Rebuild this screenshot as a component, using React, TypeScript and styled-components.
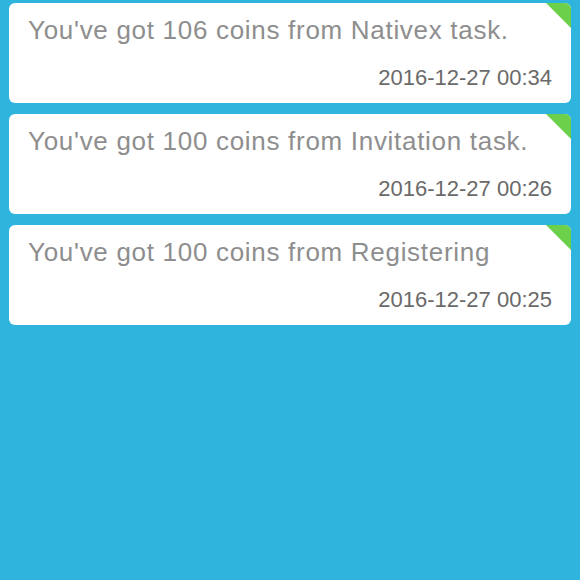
import React from "react";
import styled, { createGlobalStyle } from "styled-components";

const Global = createGlobalStyle`
  html, body {
    margin: 0;
    padding: 0;
    background: #2fb4de;
    font-family: "Helvetica Neue", "Liberation Sans", Arial, sans-serif;
  }
`;

const Page = styled.div`
  min-height: 580px;
  background: #2fb4de;
  padding: 3px 9px 0 9px;
  box-sizing: border-box;
  display: flex;
  flex-direction: column;
  gap: 11px;
`;

const Card = styled.div`
  position: relative;
  height: 100px;
  background: #ffffff;
  border-radius: 6px;
  overflow: hidden;
  box-sizing: border-box;
  padding: 11px 19px 0 19px;
  display: flex;
  flex-direction: column;
`;

const Corner = styled.div`
  position: absolute;
  top: 0;
  right: 0;
  width: 0;
  height: 0;
  border-style: solid;
  border-width: 0 25px 25px 0;
  border-color: transparent #6cd04a transparent transparent;
`;

const Message = styled.div`
  font-size: 26px;
  line-height: 32px;
  letter-spacing: 0.7px;
  color: #8e8e8e;
  white-space: nowrap;
`;

const Time = styled.div`
  margin-top: 19px;
  align-self: flex-end;
  font-size: 22px;
  line-height: 26px;
  color: #6a6a6a;
`;

const items = [
  { text: "You've got 106 coins from Nativex task.", time: "2016-12-27 00:34" },
  { text: "You've got 100 coins from Invitation task.", time: "2016-12-27 00:26" },
  { text: "You've got 100 coins from Registering", time: "2016-12-27 00:25" },
];

export default function App() {
  return (
    <>
      <Global />
      <Page>
        {items.map((it, i) => (
          <Card key={i}>
            <Corner />
            <Message>{it.text}</Message>
            <Time>{it.time}</Time>
          </Card>
        ))}
      </Page>
    </>
  );
}
